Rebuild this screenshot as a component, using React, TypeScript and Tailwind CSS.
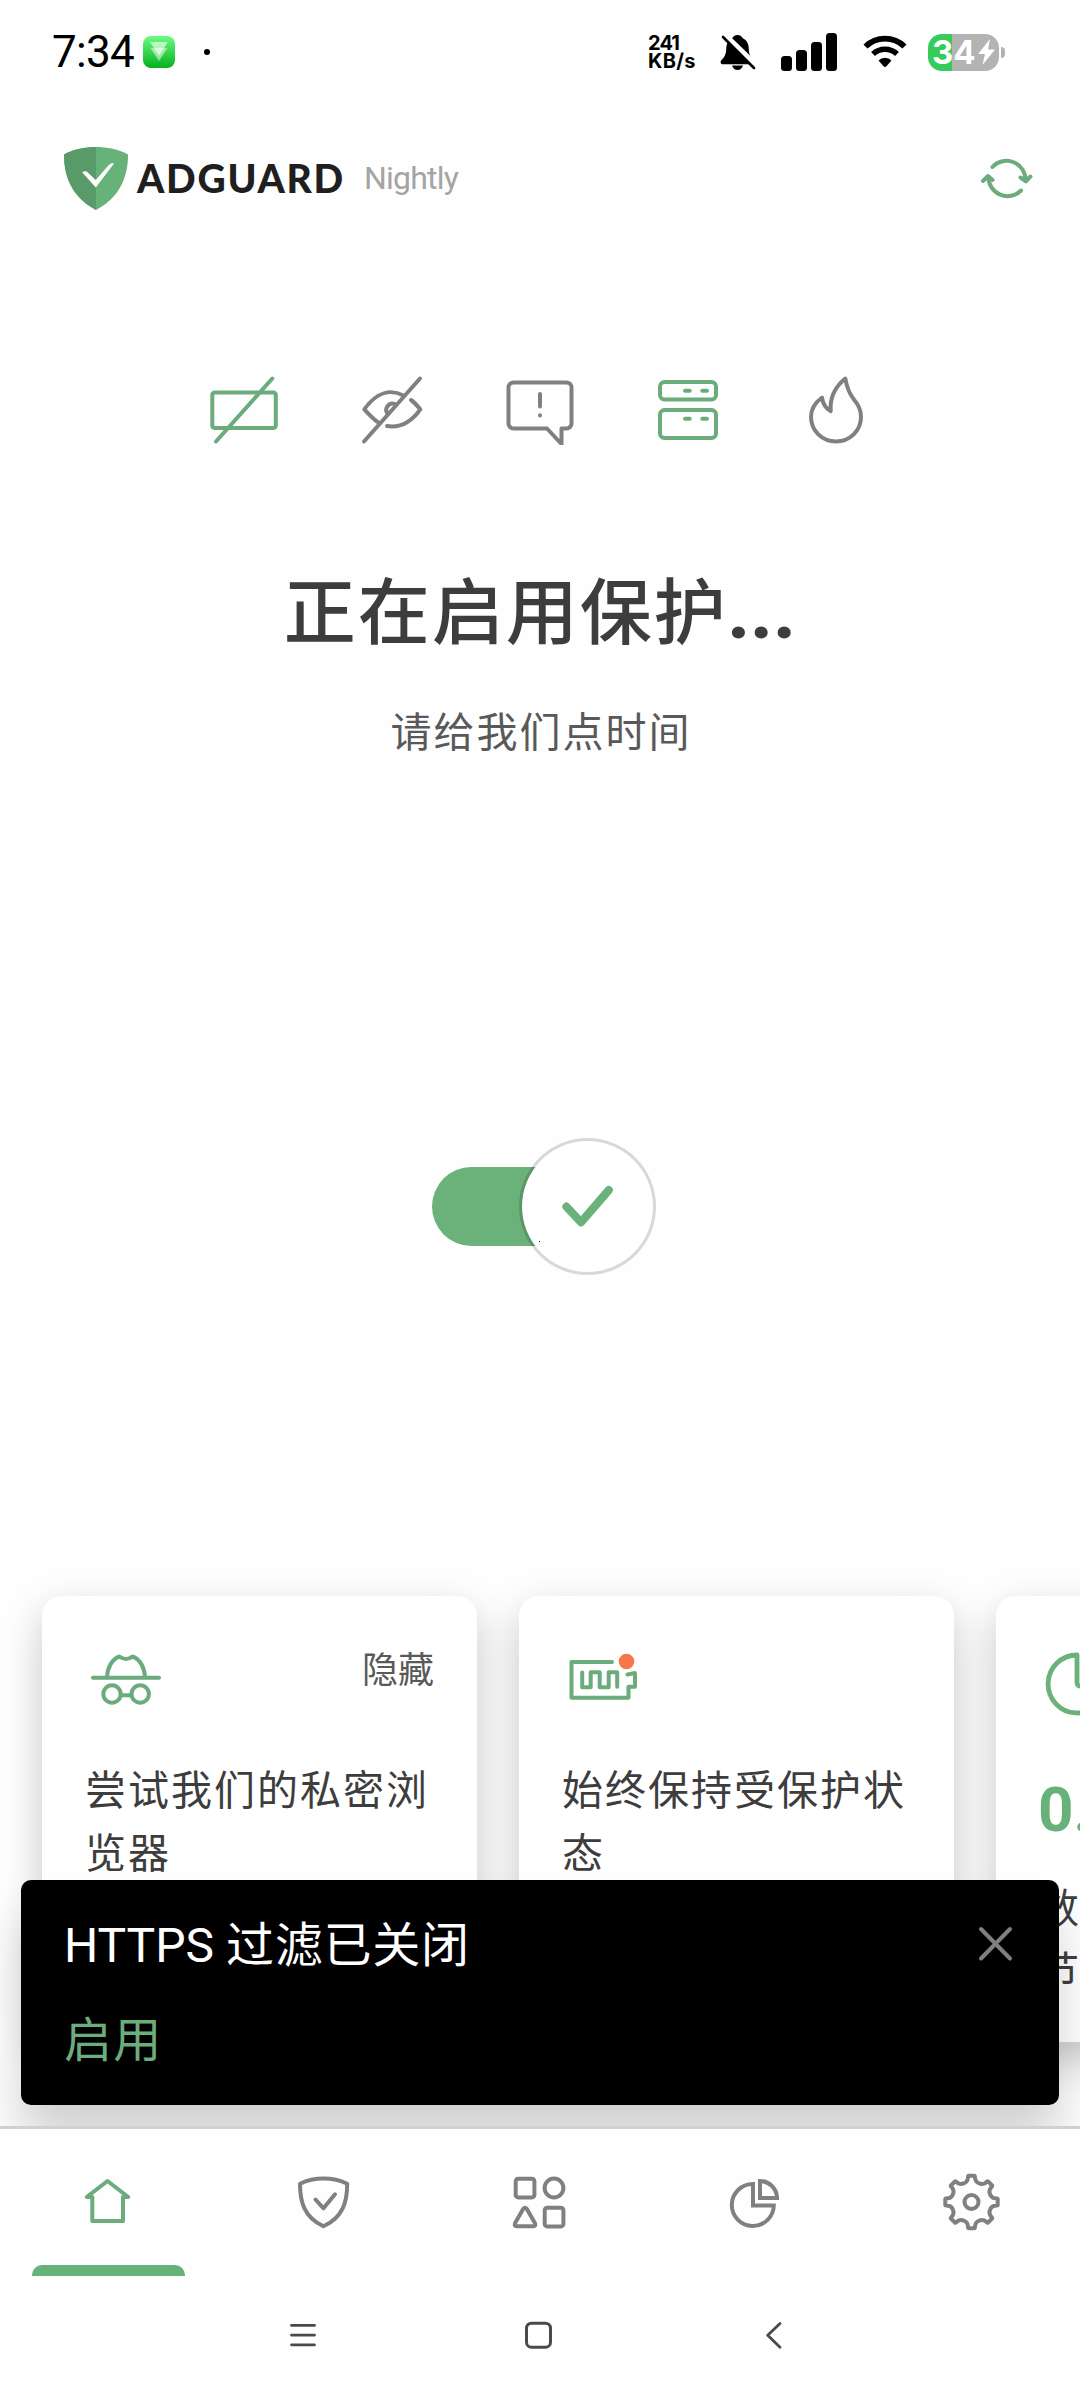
import type { ReactNode } from "react";

type IconProps = {
  box: string;
  className: string;
  width?: number;
  children: ReactNode;
};

const Icon = ({ box, className, width = 4, children }: IconProps) => (
  <svg
    viewBox={box}
    className={`shrink-0 ${className}`}
    fill="none"
    stroke="currentColor"
    strokeWidth={width}
    strokeLinecap="round"
    strokeLinejoin="round"
  >
    {children}
  </svg>
);

const gearPath = () => {
  const pt = (r: number, deg: number) => {
    const a = ((deg - 90) * Math.PI) / 180;
    return `${(r * Math.cos(a)).toFixed(2)} ${(r * Math.sin(a)).toFixed(2)}`;
  };
  let d = "";
  for (let i = 0; i < 8; i++) {
    const a = i * 45;
    d += `${i === 0 ? "M" : "L"}${pt(26.4, a - 7)}L${pt(26.4, a + 7)}L${pt(22.6, a + 10)}`;
    d += `Q${pt(20, a + 15)} ${pt(20.2, a + 22.5)}Q${pt(20, a + 30)} ${pt(22.6, a + 35)}`;
  }
  return `${d}Z`;
};

const StatusBar = () => (
  <div className="flex h-[104px] items-center pl-[52px] pr-[75px] text-black">
    <span className="w-[91px] font-['Roboto'] text-[44px] font-normal leading-none tracking-[-0.7px]">
      7:34
    </span>
    <svg viewBox="0 0 32 32" className="h-8 w-8">
      <defs>
        <linearGradient id="appBg" x1="0" y1="0" x2="0" y2="1">
          <stop offset="0" stopColor="#6cfb83" />
          <stop offset="1" stopColor="#06b01e" />
        </linearGradient>
      </defs>
      <rect width="32" height="32" rx="8" fill="url(#appBg)" />
      <path d="M7 6h18l-9 14z" fill="#fff" opacity=".6" />
      <path d="M7.500 12h17l-8.500 13z" fill="#fff" opacity=".5" />
    </svg>
    <span className="ml-[29px] h-1.5 w-1.5 rounded-full bg-black" />

    <div className="ml-auto flex items-center">
      <div className="w-[72px] font-['Inter'] text-[20px] font-bold leading-[18px]">
        <div className="tracking-[-0.9px]">241</div>
        <div className="tracking-[0.3px]">KB/s</div>
      </div>
      <svg viewBox="720 33 37 37" className="h-[37px] w-[37px]">
        <path
          d="M737.500 34c2.600 0 4.600 1.500 5.200 3.200 4 1.700 6 5.600 6 10.300 0 5 1.500 8.500 4.800 11.500 1.800 1.900.9 4.300-1.500 4.300h-29c-2.400 0-3.200-2.200-1.500-4.200 3.200-3 4.800-6.600 4.800-11.600 0-4.700 2-8.600 6-10.300.6-1.700 2.600-3.200 5.200-3.200z"
          fill="#000"
        />
        <path d="M732 64.500h11c-1 3-3 4.500-5.500 4.500s-4.500-1.500-5.500-4.500z" fill="#000" />
        <path d="M724 33.500l33 32" stroke="#fff" strokeWidth="6" />
        <path d="M723 36l31 31" stroke="#000" strokeWidth="2.600" strokeLinecap="round" />
      </svg>
      <div className="ml-[24px] flex h-[38px] items-end gap-1">
        <span className="h-[15px] w-[11px] rounded-[3.5px] bg-black" />
        <span className="h-[21px] w-[11px] rounded-[3.5px] bg-black" />
        <span className="h-[29px] w-[11px] rounded-[3.5px] bg-black" />
        <span className="h-[38px] w-[11px] rounded-[3.5px] bg-black" />
      </div>
      <svg viewBox="862 34 46 36" className="ml-[25px] h-[36px] w-[46px]" fill="none" stroke="#000">
        <path d="M865.500 46.500a28 28 0 0 1 39 0" strokeWidth="5.800" />
        <path d="M873 54a17.500 17.500 0 0 1 24 0" strokeWidth="5.600" />
        <path d="M878.500 60.500a9 9 0 0 1 13 0l-5 5.700q-1.500 1.400-3 0z" fill="#000" stroke="none" />
      </svg>
      <div className="ml-5 flex h-[37px] w-[71px] items-center rounded-[14px] bg-[linear-gradient(90deg,#35cc5a_24px,#b3b3b3_24px)] pl-1">
        <span className="font-['Inter'] text-[33px] font-bold leading-[37px] text-white">34</span>
        <svg viewBox="0 0 17 26" className="ml-0.5 h-[26px] w-[17px]">
          <path d="M12 0L0 15h7L4.500 26 17 10.500h-7z" fill="#fff" />
        </svg>
      </div>
      <span className="ml-0.5 h-[11px] w-1 rounded-r-full bg-[#b3b3b3]" />
    </div>
  </div>
);

const Header = () => (
  <header className="flex h-[149px] items-center pl-16 pr-[46px]">
    <svg viewBox="0 0 64 63" className="h-[63px] w-16">
      <path
        d="M32 0C21 0 10 2 0 7.500 0 18 1.200 47 32 63 62.800 47 64 18 64 7.500 54 2 43 0 32 0z"
        fill="#67b279"
      />
      <path d="M32 0C21 0 10 2 0 7.500 0 18 1.200 47 32 63z" fill="#589b68" />
      <path
        d="M31.800 40.500L18.300 25.500c1.500-1.800 4-1.500 5.200-.2l8.300 7.700L45 17.800c1.500-1.700 3.500-2 5-1.200z"
        fill="#fff"
      />
    </svg>
    <span className="ml-[9px] w-[227px] font-['Lato'] text-[39px] font-black leading-none tracking-[1.7px] text-[#1f1f1f]">
      ADGUARD
    </span>
    <span className="mb-0.5 font-['Roboto'] text-[32px] font-normal leading-none tracking-[-0.8px] text-[#a4a4a4]">
      Nightly
    </span>
    <Icon box="979 155 55 48" className="ml-auto h-12 w-[55px] text-[#6bab7c]">
      <path d="M992.500 167a19 19 0 0 1 33 13.500M1020.500 177.500l5 3.500 5-4.500-4.500 5z" />
      <path d="M1021 190.500a19 19 0 0 1-32.500-13.500M983 181l5-5 4.500 4-4.500-3.500z" />
    </Icon>
  </header>
);

const ProtectionIcons = () => (
  <div className="mt-[122px] flex justify-center">
    <div className="flex w-[148px] justify-center text-[#6bab7c]">
      <Icon box="209 375 70 70" className="h-[70px] w-[70px]">
        <rect x="212.300" y="392.500" width="63.500" height="35.500" rx="2.500" />
        <path d="M272.300 378.500L216 441.500" />
      </Icon>
    </div>
    <div className="flex w-[148px] justify-center text-[#808080]">
      <Icon box="357 375 70 70" className="h-[70px] w-[70px]">
        <path d="M420 378.500L364 441.500" />
        <path d="M403.500 395.500C391 389 377 391.500 364.300 409.300c5 5.500 9.500 10.200 14.500 13.500" />
        <path d="M411 400c3.500 2.500 6.500 6 9.300 9.300C411 422.500 400 428 387 426" />
        <path d="M387.500 413.500a6.300 6.300 0 0 1 7.500-9.500" />
      </Icon>
    </div>
    <div className="flex w-[148px] justify-center text-[#808080]">
      <Icon box="505 375 70 70" className="h-[70px] w-[70px]">
        <path d="M513.500 382.500h53a5 5 0 0 1 5 5v36a5 5 0 0 1-5 5h-5V444l-14.500-15.500h-33.500a5 5 0 0 1-5-5v-36a5 5 0 0 1 5-5z" />
        <path d="M540 394v12.500M540 415.200v.2" />
      </Icon>
    </div>
    <div className="flex w-[148px] justify-center text-[#6bab7c]">
      <Icon box="653 375 70 70" className="h-[70px] w-[70px]">
        <rect x="660" y="382" width="56" height="17.500" rx="4.500" />
        <rect x="660" y="410" width="56" height="28" rx="4.500" />
        <path d="M685 390.700h4.700M702.300 390.700h4.700M685 418.700h4.700M702.300 418.700h4.700" />
      </Icon>
    </div>
    <div className="flex w-[148px] justify-center text-[#808080]">
      <Icon box="801 375 70 70" className="h-[70px] w-[70px]">
        <path d="M845.300 378.500c1.300 8 4.200 15.500 9 21.500 4.300 5 6.700 10.500 6.700 16.800 0 14-11.200 24.700-25 24.700s-25-10.700-25-24.700c0-7.500 4-14 11-19.300.8 6 4 11 8.700 13.700-1-13 4-24 14.600-32.700z" />
      </Icon>
    </div>
  </div>
);

const Toggle = () => (
  <button type="button" aria-label="Protection" className="relative ml-2 mt-[378px] flex h-[137px] w-[224px] items-center">
    <span className="h-[79px] w-[120px] rounded-l-full bg-[#6ab17a]" />
    <span className="absolute right-0 top-0 flex h-[137px] w-[137px] items-center justify-center rounded-full border-[3px] border-black/15 bg-white bg-clip-padding">
      <Icon box="559 1182 58 50" className="h-[50px] w-[58px] text-[#6ab17a]" width={8.2}>
        <path d="M566.500 1206.700l14.500 15.500 27.700-32" />
      </Icon>
    </span>
    <span className="absolute left-[107px] top-[103px] h-px w-px bg-black" />
  </button>
);

const cardClass =
  "h-[446px] w-[435px] shrink-0 rounded-[20px] bg-white pl-[43px] pt-[54px] shadow-[0_16px_40px_rgba(0,0,0,0.22)]";
const cardText = "text-[41px] leading-[63px] tracking-[2px] text-[#3d3d3d]";

const Cards = () => (
  <div className="flex gap-[42px] pl-[42px]">
    <div className={cardClass}>
      <div className="flex justify-between pr-[43px]">
        <Icon box="89 1650 75 60" className="ml-1 h-[60px] w-[75px] text-[#6bab7c]">
          <path d="M93 1677.700h66" />
          <path d="M107 1677c.5-9.500 5-18 12.500-20.500 2.500 2 4 2.500 6.500 2.500s4-.5 6.500-2.500c7.500 2.500 12 11 12.500 20.500" />
          <circle cx="112" cy="1694" r="8.700" />
          <circle cx="140.200" cy="1694" r="8.700" />
          <path d="M121 1695.300h10" />
        </Icon>
        <span className="-mt-1.5 text-[36px] leading-[46px] text-[#595959]">隐藏</span>
      </div>
      <p className={`mt-[46px] ${cardText}`}>
        尝试我们的私密浏
        <br />
        览器
      </p>
    </div>
    <div className={cardClass}>
      <Icon box="567 1650 75 60" className="ml-[5px] h-[60px] w-[75px] text-[#6bab7c]">
        <path d="M612 1662h-40.500v35.700h57v-10.900h6.500V1673l-7.500 1.500" />
        <path d="M582.200 1672.500v14.700h8.500v-15h9v15h9v-15h8.500v14.500" />
        <circle cx="626.500" cy="1661.500" r="7.800" fill="#f5774a" stroke="none" />
      </Icon>
      <p className={`mt-[46px] ${cardText}`}>
        始终保持受保护状
        <br />态
      </p>
    </div>
    <div className={cardClass}>
      <Icon box="1044 1650 66 66" className="ml-[5px] h-[66px] w-[66px] text-[#6ab17a]" width={4.8}>
        <path d="M1077 1655a29 29 0 1 0 29 31h-26a3 3 0 0 1-3-3z" />
      </Icon>
      <div className="-ml-px mt-[63px] font-['Roboto'] text-[62px] font-bold leading-[62px] text-[#67b279]">0.</div>
      <p className={`-ml-px mt-[33px] ${cardText}`}>
        数
        <br />节
      </p>
    </div>
  </div>
);

const Snackbar = () => (
  <div className="absolute left-[21px] top-[1627px] flex h-[225px] w-[1038px] justify-between rounded-[10px] bg-black pl-[43px] pr-[44px] shadow-[0_36px_48px_rgba(0,0,0,0.18)]">
    <div>
      <p className="mt-[30px] font-['Roboto','Noto_Sans_CJK_SC',sans-serif] text-[48px] leading-[72px] text-white">
        HTTPS <span className="tracking-[0.8px]">过滤已关闭</span>
      </p>
      <p className="mt-[18px] text-[48px] leading-[72px] tracking-[1.2px] text-[#6cad7d]">启用</p>
    </div>
    <Icon box="976 1924 39 39" className="mt-11 h-[39px] w-[39px] text-[#808080]">
      <path d="M981 1929l29 29.500M1010 1929l-29 29.500" />
    </Icon>
  </div>
);

const BottomNav = () => (
  <nav className="flex h-[150px] justify-between border-t-[3px] border-[#d0d0d0] bg-[#fefefe]">
    <div className="flex w-[216px] flex-col items-center justify-between pt-[42px] text-[#6bab7c]">
      <Icon box="77 2171 62 62" className="h-[62px] w-[62px]">
        <path d="M92.300 2197h-5.500l20.700-16 20.700 16h-5.200v24H92.300z" />
      </Icon>
      <span className="h-[11px] w-[153px] rounded-t-[10px] bg-[#67b279]" />
    </div>
    <div className="flex w-[216px] justify-center pt-[42px] text-[#808080]">
      <Icon box="293 2171 62 62" className="h-[62px] w-[62px]">
        <path d="M323.500 2178.600c-8.300 0-16.300 1.700-23.500 5.100 0 18 4 33.500 23.500 42.600 19.500-9.100 23.700-24.600 23.700-42.600-7.200-3.400-15.400-5.100-23.700-5.100z" />
        <path d="M315.500 2199.500l8 8.800 11.500-14" />
      </Icon>
    </div>
    <div className="flex w-[216px] justify-center pt-[42px] text-[#808080]">
      <Icon box="509 2171 62 62" className="h-[62px] w-[62px]">
        <rect x="515.700" y="2178.700" width="18.700" height="18.700" rx="2.500" />
        <circle cx="554" cy="2188" r="9.400" />
        <path d="M523.300 2208.800q1.700-2.200 3.400 0l8.300 14.500q1 2.800-1.700 3h-16.600q-2.700-.2-1.700-3z" />
        <rect x="544.700" y="2207.700" width="18.700" height="18.700" rx="2.500" />
      </Icon>
    </div>
    <div className="flex w-[216px] justify-center pt-[42px] text-[#808080]">
      <Icon box="725 2171 62 62" className="h-[62px] w-[62px]">
        <g strokeLinejoin="miter" strokeLinecap="butt">
          <path d="M753 2184a21 21 0 1 0 20.800 21.500H753z" />
          <path d="M760 2181v17h17a17.200 17.200 0 0 0-17-17z" />
        </g>
      </Icon>
    </div>
    <div className="flex w-[216px] justify-center pt-[42px] text-[#808080]">
      <Icon box="-30.500 -31 62 62" className="h-[62px] w-[62px]">
        <path d={gearPath()} />
        <circle r="7" />
      </Icon>
    </div>
  </nav>
);

const SystemNav = () => (
  <div className="flex h-[124px] items-start pl-[285px] pt-[39px] text-[#4a4a4a]">
    <Icon box="285 2315 40 40" className="h-10 w-10" width={2.8}>
      <path d="M291.500 2325.400h23M291.500 2335.100h23M291.500 2344.800h23" />
    </Icon>
    <Icon box="518 2315 40 40" className="ml-[193px] h-10 w-10" width={3}>
      <rect x="526.500" y="2323.200" width="24" height="24" rx="5" />
    </Icon>
    <Icon box="754.500 2315 40 40" className="ml-[196px] h-10 w-10" width={2.8}>
      <path d="M780.500 2323.500l-12.300 11.700 12.300 12" />
    </Icon>
  </div>
);

export default function App() {
  return (
    <div className="flex h-[2400px] w-[1080px] flex-col overflow-hidden bg-[#fefefe] font-['Noto_Sans_CJK_SC',sans-serif]">
      <StatusBar />
      <Header />
      <main className="relative flex h-[1873px] flex-col overflow-hidden">
        <ProtectionIcons />
        <h1 className="mt-[115px] text-center font-['Roboto','Noto_Sans_CJK_SC',sans-serif] text-[72px] font-medium leading-[108px] tracking-[2px] text-[#3d3d3d]">
          正在启用保护<span className="font-black tracking-[1px]">...</span>
        </h1>
        <p className="mt-[30px] pl-0.5 text-center text-[41px] leading-[62px] tracking-[2px] text-[#595959]">
          请给我们点时间
        </p>
        <div className="flex h-[836px] justify-center">
          <Toggle />
        </div>
        <Cards />
        <Snackbar />
      </main>
      <BottomNav />
      <SystemNav />
    </div>
  );
}
